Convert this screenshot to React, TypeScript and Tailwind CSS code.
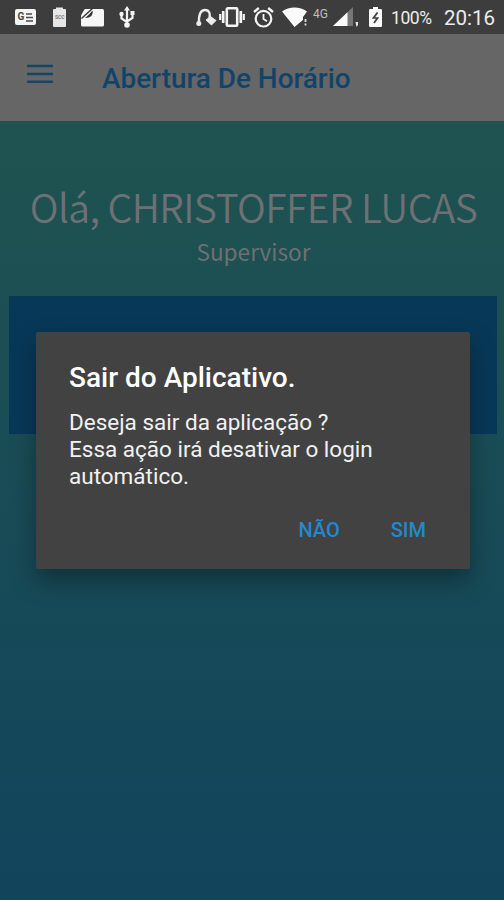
import React from 'react';

function NewsIcon() {
  return (
    <div className="w-[21px] h-4 rounded-[2px] bg-[#f4f4f4] flex items-center justify-center gap-[2px]">
      <span className="text-[10px] leading-none font-bold text-[#4a4a4a]">G</span>
      <svg width="7" height="9" viewBox="0 0 7 9" stroke="#4a4a4a" strokeWidth="1.4">
        <path d="M0 1h6M0 4.5h7M0 8h7" />
      </svg>
    </div>
  );
}

function ClipboardIcon() {
  return (
    <div className="relative w-[13px] h-5 ml-[17px]">
      <svg width="13" height="20" viewBox="0 0 13 20">
        <path d="M1 2h2V.5h7V2h2a1 1 0 0 1 1 1v16a1 1 0 0 1-1 1H1a1 1 0 0 1-1-1V3a1 1 0 0 1 1-1z" fill="#e6e6e6" />
      </svg>
      <span className="absolute left-[2px] top-[7px] text-[5px] leading-[6px] font-bold text-[#777]">SCC</span>
    </div>
  );
}

function FolderIcon() {
  return (
    <svg className="ml-[14px]" width="24" height="19" viewBox="0 0 24 19">
      <path d="M3 1h19.500A1.500 1.500 0 0 1 24 2.500V17a1.500 1.500 0 0 1-1.500 1.500h-20A1.500 1.500 0 0 1 1 17V8z" fill="#f6f6f6" />
      <path d="M0 0h5.500L1 7H0z" fill="#3d3d3d" />
      <path d="M12.500 2.500c.8 4.500-1.500 7.500-7.500 7.500l4-3.500z" fill="#333" />
      <path d="M13 0L1.500 10.500" stroke="#3d3d3d" strokeWidth="1.500" />
    </svg>
  );
}

function UsbIcon() {
  return (
    <svg className="ml-[15px]" width="16" height="22" viewBox="0 0 16 22" fill="none" stroke="#f4f4f4" strokeWidth="2.200">
      <path d="M8 4v15M8 16l-5.500-3.500V8M8 15.500l5.500-3.500V7" />
      <path d="M8 0l3 4.500H5zM11.500 5h4v4h-4z" fill="#f4f4f4" stroke="none" />
      <circle cx="2.500" cy="8" r="2.200" fill="#f4f4f4" stroke="none" />
      <circle cx="8" cy="19" r="2.800" fill="#f4f4f4" stroke="none" />
    </svg>
  );
}

function HeadsetIcon() {
  return (
    <svg width="21" height="19" viewBox="0 0 21 19" fill="none" stroke="#ececec" strokeWidth="2.400">
      <path d="M3 15C2.500 7 4.500 2 9 2s5.500 4 4.500 9" />
      <circle cx="2.800" cy="15.500" r="2.500" fill="#ececec" stroke="none" />
      <path d="M10 12l4.500-3.500 5.500 4-4.500 4.500z" fill="#ececec" stroke="#ececec" strokeWidth="1" strokeLinejoin="round" />
    </svg>
  );
}

function VibrateIcon() {
  return (
    <svg className="ml-[2px]" width="26" height="20" viewBox="0 0 26 20" fill="none" stroke="#f4f4f4">
      <rect x="7.800" y="1.300" width="10.400" height="17.400" rx="1" strokeWidth="2.600" />
      <path d="M4.200 4v12M21.800 4v12" strokeWidth="2.700" />
      <path d="M1.200 7v6M24.800 7v6" strokeWidth="2.200" />
    </svg>
  );
}

function AlarmIcon() {
  return (
    <svg className="ml-2" width="21" height="21" viewBox="0 0 21 21" fill="none" stroke="#f4f4f4" strokeWidth="2.200">
      <circle cx="10.500" cy="11.700" r="7.800" />
      <path d="M10.500 7v5l3.500 2.200" strokeWidth="1.800" />
      <path d="M1 5l4.800-4M20 5l-4.800-4" strokeWidth="2.300" />
    </svg>
  );
}

function WifiIcon() {
  return (
    <svg className="ml-2" width="26" height="20" viewBox="0 0 26 20">
      <path d="M0 4.500C7-1 18-1 25 4.500l-4 5.500v3l-8.500 7z" fill="#fafafa" />
      <path d="M21.500 10h4v9h-4z" fill="#3d3d3d" />
      <path d="M23.500 12v3M23.500 16.500v2" stroke="#ddd" strokeWidth="1.800" />
    </svg>
  );
}

function SignalIcon() {
  return (
    <svg className="ml-[4px]" width="26" height="20" viewBox="0 0 26 20">
      <path d="M20 0v19H0z" fill="#777" />
      <path d="M14.500 5.200V19H0z" fill="#fafafa" />
      <path d="M22.500 15h2.500v3l-1.500 2z" fill="#e6e6e6" />
    </svg>
  );
}

function BatteryIcon() {
  return (
    <svg className="ml-[10px]" width="13" height="20" viewBox="0 0 13 20">
      <path d="M1.200 2H4V0h5v2h2.800A1.200 1.200 0 0 1 13 3.200v15.600a1.200 1.200 0 0 1-1.200 1.200H1.200A1.200 1.200 0 0 1 0 18.800V3.200A1.200 1.200 0 0 1 1.200 2z" fill="#fafafa" />
      <path d="M8.500 5.500L4.500 11h4L5 16" stroke="#3d3d3d" strokeWidth="1.700" fill="none" />
    </svg>
  );
}

function StatusBar() {
  return (
    <div className="h-[34px] bg-[#3d3d3d] flex items-center justify-between pl-[15px] pr-[8px] text-[#ededed]">
      <div className="flex items-center">
        <NewsIcon />
        <ClipboardIcon />
        <FolderIcon />
        <UsbIcon />
      </div>
      <div className="flex items-center">
        <HeadsetIcon />
        <VibrateIcon />
        <AlarmIcon />
        <WifiIcon />
        <span className="ml-[5px] mb-[7px] w-4 text-[12px] leading-none text-[#bdbdbd]">4G</span>
        <SignalIcon />
        <BatteryIcon />
        <span className="ml-[9px] w-[43px] text-[17.500px] leading-none tracking-tight pt-[3px]">100%</span>
        <span className="ml-[10px] w-[52px] text-[20.500px] leading-none pt-[2px]">20:16</span>
      </div>
    </div>
  );
}

export default function App() {
  return (
    <div className="relative w-[504px] h-[900px] overflow-hidden flex flex-col font-['Roboto',sans-serif]">
      <StatusBar />

      {/* Toolbar */}
      <header className="h-[87px] bg-[#666666] flex items-center px-[26px]">
        <svg className="mb-2" width="28" height="20" viewBox="0 0 28 20" stroke="#164666" strokeWidth="2.500">
          <path d="M1 2h26M1 10h26M1 17.800h26" />
        </svg>
        <h1 className="ml-12 mt-[2px] text-[27.900px] leading-8 font-medium text-[#114468] whitespace-nowrap">
          Abertura De Horário
        </h1>
      </header>

      {/* Home */}
      <main className="flex-1 bg-linear-to-b from-[#1f5350] to-[#12445c] flex flex-col font-['Noto_Sans_CJK_JP',sans-serif] text-[#6d7074]">
        <div className="h-[175px] pt-[57px] pl-[3px] text-center">
          <p className="text-[39px] leading-[56px] font-[350] tracking-[-0.550px] whitespace-nowrap">
            Olá, CHRISTOFFER LUCAS
          </p>
          <p className="mt-px text-[22.600px] leading-[34px]">Supervisor</p>
        </div>
        <div className="ml-[9px] mr-[7px] h-[138px] bg-[#083858]" />
      </main>

      {/* Exit dialog */}
      <div className="absolute left-9 top-[332px] w-[434px] h-[237px] rounded-[2px] bg-[#424242] shadow-[0_12px_24px_0px_rgba(0,0,0,0.34)] px-[33px] pt-[30px]">
        <h2 className="text-[28px] leading-8 font-medium text-white">Sair do Aplicativo.</h2>
        <p className="mt-[15px] text-[22.500px] leading-[27px] text-[#f1f1f1] whitespace-nowrap">
          Deseja sair da aplicação ?
          <br />
          Essa ação irá desativar o login
          <br />
          automático.
        </p>
        <div className="mt-[28px] pr-[11px] flex justify-end gap-[51px] text-[20px] leading-6 font-medium text-[#2489cb]">
          <button>NÃO</button>
          <button>SIM</button>
        </div>
      </div>
    </div>
  );
}
